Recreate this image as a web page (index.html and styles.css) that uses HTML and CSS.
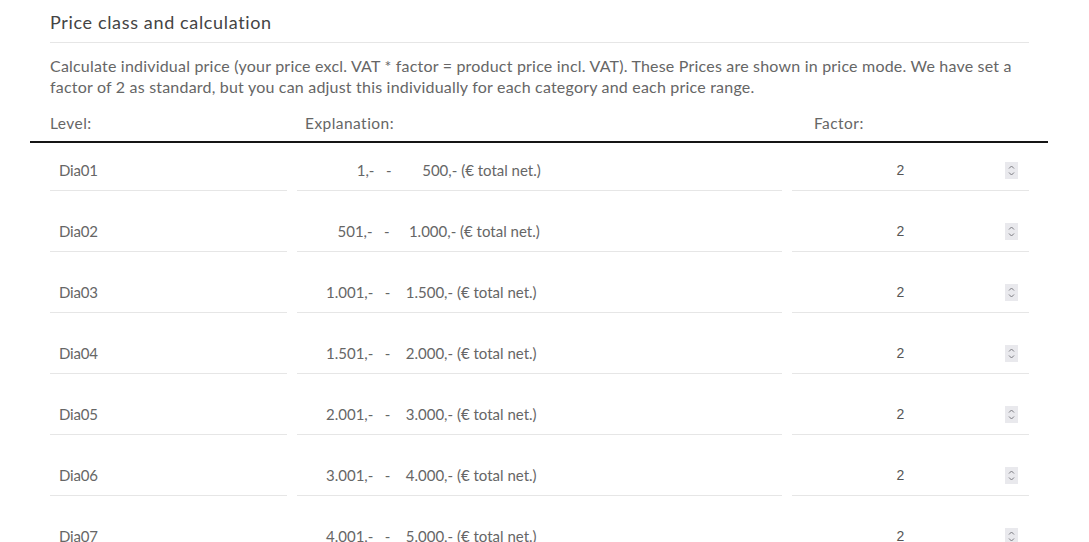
FILE: index.html
```html
<!DOCTYPE html>
<html lang="en">
<head>
<meta charset="utf-8">
<title>Price class and calculation</title>
<link rel="stylesheet" href="styles.css">
</head>
<body>
<div class="page">
  <h2 class="title">Price class and calculation</h2>
  <p class="desc">Calculate individual price (your price excl. VAT * factor = product price incl. VAT). These Prices are shown in price mode. We have set a factor of 2 as standard, but you can adjust this individually for each category and each price range.</p>
  <div class="head">
    <span class="h-level">Level:</span>
    <span class="h-expl">Explanation:</span>
    <span class="h-factor">Factor:</span>
  </div>
  <div class="rows">
    <div class="row">
      <div class="cell level">Dia01</div>
      <div class="cell expl">        1,-   -        500,- (€ total net.)</div>
      <div class="cell factor"><span class="val">2</span><span class="spin"><svg width="13" height="17" viewBox="0 0 13 17"><path d="M4 6.5 L6.5 4 L9 6.5 M4 10.5 L6.5 13 L9 10.5" fill="none" stroke="#7a7a80" stroke-width="1"/></svg></span></div>
    </div>
    <div class="row">
      <div class="cell level">Dia02</div>
      <div class="cell expl">   501,-   -     1.000,- (€ total net.)</div>
      <div class="cell factor"><span class="val">2</span><span class="spin"><svg width="13" height="17" viewBox="0 0 13 17"><path d="M4 6.5 L6.5 4 L9 6.5 M4 10.5 L6.5 13 L9 10.5" fill="none" stroke="#7a7a80" stroke-width="1"/></svg></span></div>
    </div>
    <div class="row">
      <div class="cell level">Dia03</div>
      <div class="cell expl">1.001,-   -    1.500,- (€ total net.)</div>
      <div class="cell factor"><span class="val">2</span><span class="spin"><svg width="13" height="17" viewBox="0 0 13 17"><path d="M4 6.5 L6.5 4 L9 6.5 M4 10.5 L6.5 13 L9 10.5" fill="none" stroke="#7a7a80" stroke-width="1"/></svg></span></div>
    </div>
    <div class="row">
      <div class="cell level">Dia04</div>
      <div class="cell expl">1.501,-   -    2.000,- (€ total net.)</div>
      <div class="cell factor"><span class="val">2</span><span class="spin"><svg width="13" height="17" viewBox="0 0 13 17"><path d="M4 6.5 L6.5 4 L9 6.5 M4 10.5 L6.5 13 L9 10.5" fill="none" stroke="#7a7a80" stroke-width="1"/></svg></span></div>
    </div>
    <div class="row">
      <div class="cell level">Dia05</div>
      <div class="cell expl">2.001,-   -    3.000,- (€ total net.)</div>
      <div class="cell factor"><span class="val">2</span><span class="spin"><svg width="13" height="17" viewBox="0 0 13 17"><path d="M4 6.5 L6.5 4 L9 6.5 M4 10.5 L6.5 13 L9 10.5" fill="none" stroke="#7a7a80" stroke-width="1"/></svg></span></div>
    </div>
    <div class="row">
      <div class="cell level">Dia06</div>
      <div class="cell expl">3.001,-   -    4.000,- (€ total net.)</div>
      <div class="cell factor"><span class="val">2</span><span class="spin"><svg width="13" height="17" viewBox="0 0 13 17"><path d="M4 6.5 L6.5 4 L9 6.5 M4 10.5 L6.5 13 L9 10.5" fill="none" stroke="#7a7a80" stroke-width="1"/></svg></span></div>
    </div>
    <div class="row">
      <div class="cell level">Dia07</div>
      <div class="cell expl">4.001,-   -    5.000,- (€ total net.)</div>
      <div class="cell factor"><span class="val">2</span><span class="spin"><svg width="13" height="17" viewBox="0 0 13 17"><path d="M4 6.5 L6.5 4 L9 6.5 M4 10.5 L6.5 13 L9 10.5" fill="none" stroke="#7a7a80" stroke-width="1"/></svg></span></div>
    </div>
  </div>
</div>
</body>
</html>
```
FILE: styles.css
```css
html, body {
  margin: 0;
  padding: 0;
  background: #ffffff;
  overflow: hidden;
}
body {
  font-family: Lato, "Open Sans", sans-serif;
  color: #666666;
}
.page {
  width: 979px;
  margin-left: 50px;
}
.title {
  margin: 0;
  padding: 10px 0 8px;
  font-size: 18px;
  line-height: 24px;
  font-weight: normal;
  color: #444444;
  letter-spacing: 0.65px;
  border-bottom: 1px solid #e6e6e6;
}
.desc {
  margin: 12px 0 0;
  font-size: 16px;
  line-height: 21px;
  letter-spacing: 0.2px;
}
.head {
  display: grid;
  grid-template-columns: 237px 485px 237px;
  column-gap: 10px;
  box-sizing: border-box;
  width: 1018px;
  margin: 16px 0 0 -20px;
  padding: 0 0 7px 20px;
  border-bottom: 2px solid #151515;
  font-size: 15.5px;
  line-height: 21px;
  letter-spacing: 0.45px;
}
.h-expl { padding-left: 8px; }
.h-factor { padding-left: 22px; }
.rows {
  display: flex;
  flex-direction: column;
  gap: 19px;
  margin-top: 6px;
}
.row {
  display: grid;
  grid-template-columns: 237px 485px 237px;
  column-gap: 10px;
}
.cell {
  padding: 11px 9px 10px;
  font-size: 15px;
  line-height: 20px;
  border-bottom: 1px solid #e6e6e6;
}
.level {
  letter-spacing: -0.2px;
}
.expl {
  white-space: pre;
  padding-left: 29px;
}
.factor {
  display: flex;
  align-items: center;
  padding: 11px 11px 10px 4px;
}
.val {
  flex: 1;
  text-align: center;
  font-family: "Liberation Sans", Arial, sans-serif;
  font-size: 14px;
  color: #555555;
}
.spin {
  display: flex;
  width: 13px;
  height: 17px;
  background: #e9e9ed;
}
.spin svg { display: block; }
```
